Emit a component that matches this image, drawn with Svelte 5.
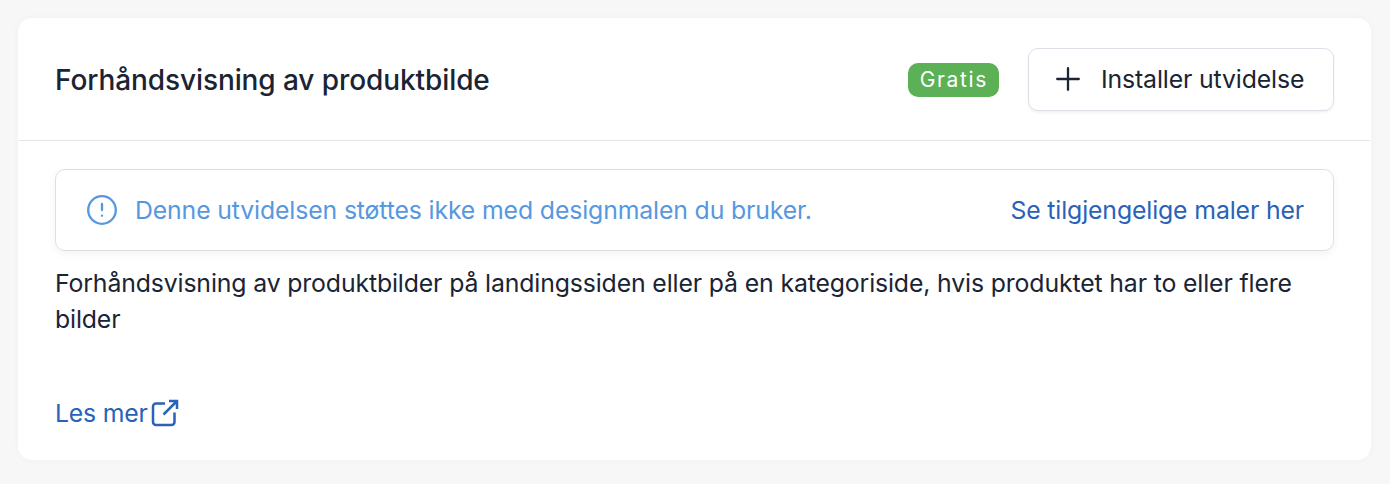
<script>
  const extension = {
    title: "Forhåndsvisning av produktbilde",
    price: "Gratis",
    description:
      "Forhåndsvisning av produktbilder på landingssiden eller på en kategoriside, hvis produktet har to eller flere bilder",
  };
</script>

<main>
  <section class="card">
    <header>
      <h2>{extension.title}</h2>
      <span class="badge">{extension.price}</span>
      <button>
        <svg width="24" height="24" viewBox="0 0 24 24">
          <path d="M12 1.200v21.600M1.200 12h21.600" />
        </svg>
        <span>Installer utvidelse</span>
      </button>
    </header>

    <div class="content">
      <div class="notice">
        <svg width="30" height="30" viewBox="0 0 30 30">
          <circle cx="15" cy="15" r="13.8" />
          <path d="M15 9v6M15 20.700v.1" />
        </svg>
        <span class="message">Denne utvidelsen støttes ikke med designmalen du bruker.</span>
        <a href="#templates">Se tilgjengelige maler her</a>
      </div>

      <p>{extension.description}</p>

      <a class="more" href="#more">
        <span>Les mer</span>
        <svg width="28" height="28" viewBox="0 0 28 28">
          <path d="M14 4.500H5A3 3 0 0 0 2 7.500V23A3 3 0 0 0 5 26H20.500A3 3 0 0 0 23.500 23V13.500" />
          <path d="M12.500 15.500L26 2M18 2H26V10" />
        </svg>
      </a>
    </div>
  </section>
</main>

<style>
  :global(body) {
    margin: 0;
    background: #f7f7f7;
  }

  main {
    box-sizing: border-box;
    height: 484px;
    padding: 18px 19px 24px 18px;
    font-family: Inter, sans-serif;
    font-size: 24.8px;
    letter-spacing: -0.13px;
    color: #1a2433;
  }

  .card {
    height: 442px;
    border-radius: 14px;
    background: #fff;
    box-shadow: 0 0 8px rgba(0, 0, 0, 0.03);
  }

  header {
    box-sizing: border-box;
    display: flex;
    align-items: center;
    height: 123px;
    margin: 0 1px;
    padding: 0 36px;
    border-bottom: 1px solid #e5e6e8;
  }

  h2 {
    flex: 1;
    margin: 0;
    padding-top: 2px;
    font-size: 28px;
    font-weight: 500;
    letter-spacing: -0.09px;
  }

  .badge {
    margin: 1px 29px 0 0;
    padding: 0 11px 0 12px;
    border-radius: 10px;
    background: #5cb157;
    color: #fff;
    font-size: 21px;
    line-height: 34px;
    letter-spacing: 1.65px;
  }

  button {
    box-sizing: border-box;
    display: flex;
    align-items: center;
    width: 306px;
    height: 63px;
    padding: 0 27px;
    border: 1px solid #dddfe6;
    border-radius: 10px;
    background: #fff;
    box-shadow: 0 2px 3px rgba(0, 0, 0, 0.05);
    color: inherit;
    font: inherit;
    letter-spacing: inherit;
    white-space: nowrap;
  }

  button svg {
    margin-right: 21px;
  }

  svg {
    flex: none;
    fill: none;
    stroke: currentColor;
    stroke-width: 2.3;
    stroke-linecap: round;
    stroke-linejoin: round;
  }

  .content {
    padding: 28px 37px;
  }

  .notice {
    box-sizing: border-box;
    display: flex;
    align-items: center;
    height: 82px;
    padding: 0 29px 0 31px;
    border: 1px solid #dcdfe4;
    border-radius: 10px;
    box-shadow: 0 3px 8px rgba(0, 0, 0, 0.05);
    color: #5698df;
  }

  .message {
    flex: 1;
    margin-left: 18px;
  }

  a {
    color: #2962b8;
    text-decoration: none;
  }

  p {
    margin: 14px 0 0;
    line-height: 36px;
  }

  .more {
    display: flex;
    align-items: center;
    margin-top: 61px;
    gap: 3px;
    letter-spacing: -0.2px;
  }

  .more svg {
    stroke-width: 2.5;
    stroke-linecap: butt;
    stroke-linejoin: miter;
  }
</style>
